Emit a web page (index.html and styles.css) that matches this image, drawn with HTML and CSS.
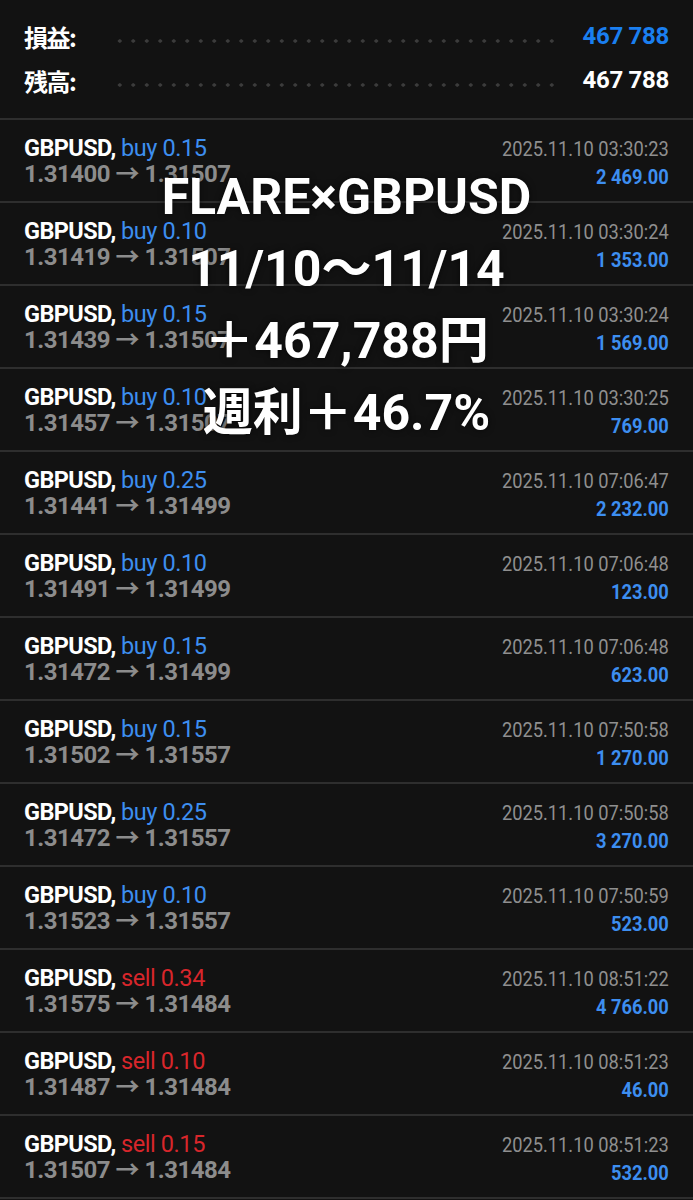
FILE: index.html
```html
<!DOCTYPE html>
<html lang="ja">
<head>
    <meta charset="UTF-8">
    <meta name="viewport" content="width=device-width, initial-scale=1.0">
    <title>GBPUSD history</title>
    <link rel="stylesheet" href="styles.css">
</head>
<body>
    <div id="summary">
        <div class="sum-row">
            <span class="sum-label">損益:</span>
            <span class="dots"></span>
            <span class="sum-value blue">467 788</span>
        </div>
        <div class="sum-row">
            <span class="sum-label">残高:</span>
            <span class="dots"></span>
            <span class="sum-value">467 788</span>
        </div>
    </div>

    <div id="deals">
        <div class="deal">
            <div class="left"><div class="line1">GBPUSD, <span class="buy">buy 0.15</span></div><div class="line2">1.31400 → 1.31507</div></div>
            <div class="right"><div class="date">2025.11.10 03:30:23</div><div class="profit">2 469.00</div></div>
        </div>
        <div class="deal">
            <div class="left"><div class="line1">GBPUSD, <span class="buy">buy 0.10</span></div><div class="line2">1.31419 → 1.31507</div></div>
            <div class="right"><div class="date">2025.11.10 03:30:24</div><div class="profit">1 353.00</div></div>
        </div>
        <div class="deal">
            <div class="left"><div class="line1">GBPUSD, <span class="buy">buy 0.15</span></div><div class="line2">1.31439 → 1.31507</div></div>
            <div class="right"><div class="date">2025.11.10 03:30:24</div><div class="profit">1 569.00</div></div>
        </div>
        <div class="deal">
            <div class="left"><div class="line1">GBPUSD, <span class="buy">buy 0.10</span></div><div class="line2">1.31457 → 1.31507</div></div>
            <div class="right"><div class="date">2025.11.10 03:30:25</div><div class="profit">769.00</div></div>
        </div>
        <div class="deal">
            <div class="left"><div class="line1">GBPUSD, <span class="buy">buy 0.25</span></div><div class="line2">1.31441 → 1.31499</div></div>
            <div class="right"><div class="date">2025.11.10 07:06:47</div><div class="profit">2 232.00</div></div>
        </div>
        <div class="deal">
            <div class="left"><div class="line1">GBPUSD, <span class="buy">buy 0.10</span></div><div class="line2">1.31491 → 1.31499</div></div>
            <div class="right"><div class="date">2025.11.10 07:06:48</div><div class="profit">123.00</div></div>
        </div>
        <div class="deal">
            <div class="left"><div class="line1">GBPUSD, <span class="buy">buy 0.15</span></div><div class="line2">1.31472 → 1.31499</div></div>
            <div class="right"><div class="date">2025.11.10 07:06:48</div><div class="profit">623.00</div></div>
        </div>
        <div class="deal">
            <div class="left"><div class="line1">GBPUSD, <span class="buy">buy 0.15</span></div><div class="line2">1.31502 → 1.31557</div></div>
            <div class="right"><div class="date">2025.11.10 07:50:58</div><div class="profit">1 270.00</div></div>
        </div>
        <div class="deal">
            <div class="left"><div class="line1">GBPUSD, <span class="buy">buy 0.25</span></div><div class="line2">1.31472 → 1.31557</div></div>
            <div class="right"><div class="date">2025.11.10 07:50:58</div><div class="profit">3 270.00</div></div>
        </div>
        <div class="deal">
            <div class="left"><div class="line1">GBPUSD, <span class="buy">buy 0.10</span></div><div class="line2">1.31523 → 1.31557</div></div>
            <div class="right"><div class="date">2025.11.10 07:50:59</div><div class="profit">523.00</div></div>
        </div>
        <div class="deal">
            <div class="left"><div class="line1">GBPUSD, <span class="sell">sell 0.34</span></div><div class="line2">1.31575 → 1.31484</div></div>
            <div class="right"><div class="date">2025.11.10 08:51:22</div><div class="profit">4 766.00</div></div>
        </div>
        <div class="deal">
            <div class="left"><div class="line1">GBPUSD, <span class="sell">sell 0.10</span></div><div class="line2">1.31487 → 1.31484</div></div>
            <div class="right"><div class="date">2025.11.10 08:51:23</div><div class="profit">46.00</div></div>
        </div>
        <div class="deal">
            <div class="left"><div class="line1">GBPUSD, <span class="sell">sell 0.15</span></div><div class="line2">1.31507 → 1.31484</div></div>
            <div class="right"><div class="date">2025.11.10 08:51:23</div><div class="profit">532.00</div></div>
        </div>

        <!-- caption laid over the list -->
        <div class="caption">
            <div>FLARE×GBPUSD</div>
            <div>11/10〜11/14</div>
            <div>＋467,788円</div>
            <div>週利＋46.7%</div>
        </div>
    </div>
</body>
</html>
```

FILE: styles.css
```css
body {
    margin: 0;
    background-color: #121212;
    color: #fff;
    font-family: Roboto, "Noto Sans CJK JP", sans-serif;
}

/* top summary */
#summary {
    padding: 14px 24px 16px;
}

.sum-row {
    display: flex;
    align-items: center;
    height: 44px;
}

.sum-label {
    font-family: "Noto Sans CJK JP", sans-serif;
    font-weight: 700;
    font-size: 24px;
    width: 89px;
    letter-spacing: -1.5px;
}

.dots {
    flex: 1;
    height: 4px;
    margin-top: 10px;
    margin-right: 20px;
    background-image: radial-gradient(circle, #3c3c3c 1.5px, transparent 1.8px);
    background-size: 13.5px 4px;
    background-repeat: repeat-x;
}

.sum-value {
    font-weight: 700;
    font-size: 24px;
    letter-spacing: -0.3px;
}

.blue {
    color: #1a7ff0;
}

/* deals list */
#deals {
    position: relative;
    border-top: 2px solid #2e2e2e;
}

.deal {
    display: flex;
    justify-content: space-between;
    padding: 15px 24px 14px;
    border-bottom: 2px solid #2e2e2e;
}

.line1 {
    font-weight: 700;
    font-size: 23.5px;
    line-height: 26px;
    letter-spacing: -0.6px;
}

.buy {
    font-weight: 400;
    color: #3d8ef0;
    letter-spacing: -0.4px;
}

.sell {
    font-weight: 400;
    color: #d8262b;
    letter-spacing: -0.4px;
}

.line2 {
    font-weight: 700;
    font-size: 24px;
    line-height: 26px;
    color: #8c8c8c;
    letter-spacing: -0.5px;
}

/* the app font is narrow, so squeeze the right column */
.right {
    text-align: right;
    padding-top: 2px;
    margin-bottom: -3px;
    transform: scaleX(0.87);
    transform-origin: right center;
}

.date {
    font-size: 21px;
    line-height: 24px;
    color: #8f8f8f;
}

.profit {
    font-size: 21px;
    line-height: 26px;
    margin-top: 3px;
    font-weight: 700;
    color: #3d8ef0;
}

.caption {
    position: absolute;
    top: 41px;
    left: 0;
    right: 0;
    text-align: center;
    font-weight: 700;
    font-size: 50px;
    line-height: 72px;
    color: #fff;
    text-shadow: 0 0 6px rgba(0, 0, 0, 0.6);
}
```
